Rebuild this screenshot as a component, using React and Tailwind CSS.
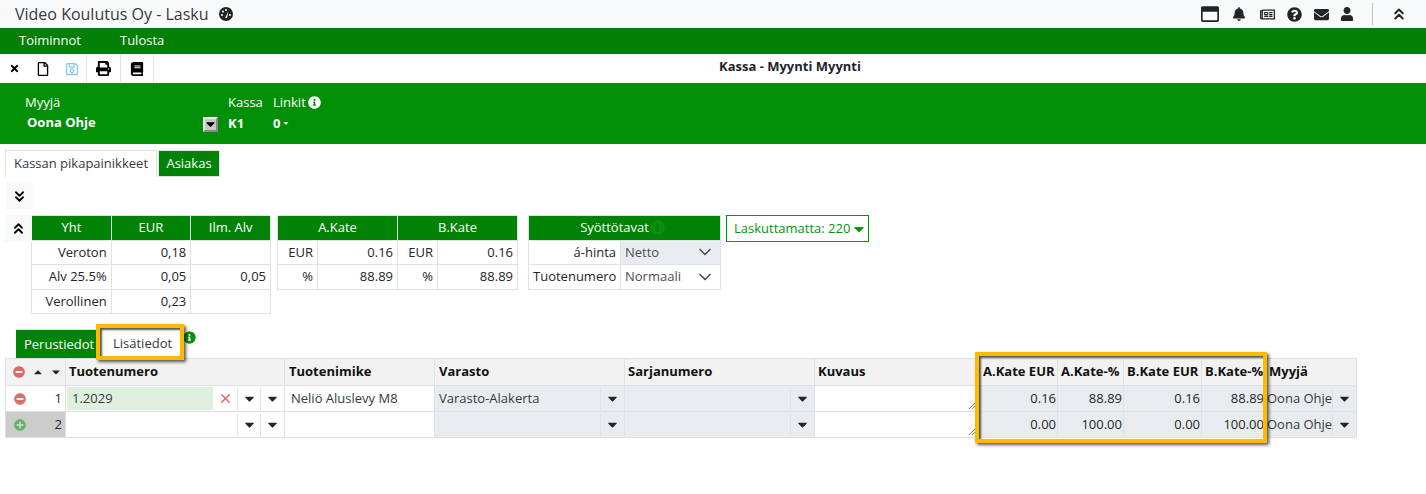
import React from "react";
import {
  FaRegWindowMaximize,
  FaBell,
  FaRegNewspaper,
  FaQuestionCircle,
  FaEnvelope,
  FaUser,
  FaTimes,
  FaRegFile,
  FaRegSave,
  FaPrint,
  FaBook,
  FaInfoCircle,
  FaMinusCircle,
  FaPlusCircle,
  FaCaretDown,
  FaCaretUp,
} from "react-icons/fa";
import { ChevronDown, ChevronsDown, ChevronsUp, X } from "lucide-react";

const cell = "border border-[#dee2e6] px-[4px] h-[24.6px] text-right text-[13px] text-[#212529] font-normal";
const head = "border border-[#dee2e6] h-[24.6px] bg-[#028207] text-white text-center text-[13px] font-normal";
const orangeBox = "border-[4px] border-[#ffb900] shadow-[2px_2px_3px_rgba(0,0,0,0.65),inset_2px_2px_2px_rgba(0,0,0,0.65)] pointer-events-none";

function GaugeIcon() {
  return (
    <svg className="ml-[10px]" width="14" height="14" viewBox="0 0 14 14">
      <circle cx="7" cy="7" r="7" fill="#212529" />
      <circle cx="3" cy="8" r="1" fill="#fff" />
      <circle cx="4" cy="4.5" r="1" fill="#fff" />
      <circle cx="7" cy="3" r="1" fill="#fff" />
      <circle cx="11" cy="8" r="1" fill="#fff" />
      <path d="M6 11 L9.5 4.5 L8 11 Z" fill="#fff" />
    </svg>
  );
}

function SummaryTables() {
  return (
    <div className="flex items-start">
      <table className="table-fixed border-collapse w-[240px] ml-[31px]">
        <thead>
          <tr>
            <th className={head}>Yht</th>
            <th className={head}>EUR</th>
            <th className={head}>Ilm. Alv</th>
          </tr>
        </thead>
        <tbody>
          <tr><td className={cell}>Veroton</td><td className={cell}>0,18</td><td className={cell}></td></tr>
          <tr><td className={cell}>Alv 25.5%</td><td className={cell}>0,05</td><td className={cell}>0,05</td></tr>
          <tr><td className={cell}>Verollinen</td><td className={cell}>0,23</td><td className={cell}></td></tr>
        </tbody>
      </table>

      <table className="table-fixed border-collapse w-[240px] ml-[6px]">
        <colgroup>
          <col className="w-[40px]" />
          <col className="w-[80px]" />
          <col className="w-[40px]" />
          <col className="w-[80px]" />
        </colgroup>
        <thead>
          <tr>
            <th colSpan={2} className={head}>A.Kate</th>
            <th colSpan={2} className={head}>B.Kate</th>
          </tr>
        </thead>
        <tbody>
          <tr><td className={cell}>EUR</td><td className={cell}>0.16</td><td className={cell}>EUR</td><td className={cell}>0.16</td></tr>
          <tr><td className={cell}>%</td><td className={cell}>88.89</td><td className={cell}>%</td><td className={cell}>88.89</td></tr>
        </tbody>
      </table>

      <table className="table-fixed border-collapse w-[192px] ml-[10px]">
        <colgroup>
          <col className="w-[92px]" />
          <col className="w-[100px]" />
        </colgroup>
        <thead>
          <tr>
            <th colSpan={2} className={head}>
              <span className="inline-flex items-center gap-[1px] -translate-x-[2px]">
                Syöttötavat <FaInfoCircle className="text-[#0b8f10] text-[15px]" />
              </span>
            </th>
          </tr>
        </thead>
        <tbody>
          <tr>
            <td className={cell}>á-hinta</td>
            <td className={`${cell} !text-left bg-[#e9ecef] !text-[#495057]`}>
              <div className="flex items-center justify-between pr-[1px] h-[20px]">Netto <ChevronDown size={20} /></div>
            </td>
          </tr>
          <tr>
            <td className={cell}>Tuotenumero</td>
            <td className={`${cell} !text-left !text-[#495057]`}>
              <div className="flex items-center justify-between pr-[1px] h-[20px]">Normaali <ChevronDown size={20} /></div>
            </td>
          </tr>
        </tbody>
      </table>

      <div className="ml-[5px] h-[27px] w-[143px] border border-[#009608] flex items-center pl-[7px] gap-[1px] text-[13px] text-[#009608]">
        Laskuttamatta: 220 <FaCaretDown className="text-[16px]" />
      </div>
    </div>
  );
}

const th = "border border-[#dee2e6] bg-[#f2f2f2] px-[4px] pb-[2px] text-left text-[13px] font-bold text-[#111] whitespace-nowrap";
const td = "border border-[#dee2e6] px-[4px] text-[13px] text-[#343a40] whitespace-nowrap";
const gray = "bg-[#e9ecef]";

function Caret() {
  return (
    <span className="flex items-center justify-center w-[23px] h-[22px] border-l border-[#dee2e6]">
      <FaCaretDown className="text-[15px] text-[#212529]" />
    </span>
  );
}

function SelectCell({ text }) {
  return (
    <td className={`${td} ${gray} !pr-[1px]`}>
      <div className="flex items-center justify-between">
        <span className="truncate">{text}</span>
        <Caret />
      </div>
    </td>
  );
}

function Row({ n, plus, code, name, store, vals }) {
  return (
    <tr className="h-[26px]">
      <td className={`border border-[#dee2e6] p-0 ${plus ? "bg-[#cccccc]" : ""}`}>
        <div className="flex items-center justify-between pl-[8px] pr-[3px] text-[13px] text-[#212529]">
          {plus ? <FaPlusCircle className="text-[12px] text-[#5cb85c]" /> : <FaMinusCircle className="text-[12px] text-[#d9534f] opacity-85" />}
          {n}
        </div>
      </td>
      <td className={`${td} !p-[1px]`}>
        <div className="flex items-center h-[23px]">
          <div className={`w-[147px] h-full flex items-center pl-[5px] ${code ? "bg-[#dff0df]" : ""}`}>{code}</div>
          <span className="w-[24px] flex justify-center">
            {code && <X size={15} strokeWidth={2.2} className="text-[#dc5f5a]" />}
          </span>
          <Caret />
          <Caret />
        </div>
      </td>
      <td className={`${td} !pl-[6px]`}>{name}</td>
      <SelectCell text={store} />
      <SelectCell text="" />
      <td className={`${td} relative`}>
        <svg className="absolute right-[1px] bottom-[1px]" width="8" height="8" viewBox="0 0 8 8">
          <path d="M1 7 L7 1 M4 7 L7 4" stroke="#777" strokeWidth="1" />
        </svg>
      </td>
      {vals.map((v, i) => (
        <td key={i} className={`${td} ${gray} text-right !px-[1px] !text-[#212529]`}>{v}</td>
      ))}
      <td className={`${td} ${gray} !px-[1px]`}>
        <div className="flex items-center justify-between">
          <span className="w-[65px] overflow-hidden">Oona Ohje</span>
          <span className="flex-1 flex justify-center border-l border-[#dee2e6] h-[22px] items-center">
            <FaCaretDown className="text-[15px] text-[#212529]" />
          </span>
        </div>
      </td>
    </tr>
  );
}

function MainTable() {
  return (
    <div className="relative ml-[5px] w-[1351px]">
      <table className="table-fixed border-collapse w-[1351px]">
        <colgroup>
          {[60, 219, 150, 190, 190, 163, 80, 66, 78, 64, 91].map((w, i) => (
            <col key={i} style={{ width: w }} />
          ))}
        </colgroup>
        <thead>
          <tr className="h-[27px]">
            <th className="border border-[#dee2e6] bg-[#f2f2f2] p-0">
              <div className="flex items-center justify-between pl-[7px] pr-[3px]">
                <FaMinusCircle className="text-[12px] text-[#d9534f] opacity-85" />
                <FaCaretUp className="text-[12px] text-[#212529]" />
                <FaCaretDown className="text-[12px] text-[#212529]" />
              </div>
            </th>
            <th className={`${th} !px-[3px]`}>Tuotenumero</th>
            <th className={th}>Tuotenimike</th>
            <th className={th}>Varasto</th>
            <th className={`${th} !px-[3px]`}>Sarjanumero</th>
            <th className={`${th} !px-[3px]`}>Kuvaus</th>
            <th className={`${th} !px-[5px]`}>A.Kate EUR</th>
            <th className={`${th} !px-[3px]`}>A.Kate-%</th>
            <th className={`${th} !px-[3px]`}>B.Kate EUR</th>
            <th className={`${th} !px-[3px]`}>B.Kate-%</th>
            <th className={`${th} !px-[3px]`}>Myyjä</th>
          </tr>
        </thead>
        <tbody>
          <Row n="1" code="1.2029" name="Neliö Aluslevy M8" store="Varasto-Alakerta" vals={["0.16", "88.89", "0.16", "88.89"]} />
          <Row n="2" plus code="" name="" store="" vals={["0.00", "100.00", "0.00", "100.00"]} />
        </tbody>
      </table>
      <div className={`absolute left-[970px] top-[-6px] w-[292px] h-[91px] ${orangeBox}`} />
    </div>
  );
}

export default function App() {
  return (
    <div className="min-h-[494px] bg-white font-['Open_Sans',sans-serif] text-[13px] text-[#212529]">
      <header className="h-[28px] bg-[#f8f9fa] flex items-center pl-[15px] pr-[18px]">
        <span className="text-[16px] text-[#343a40]">Video Koulutus Oy - Lasku</span>
        <GaugeIcon />
        <div className="ml-auto flex items-center text-[#212529]">
          <FaRegWindowMaximize className="text-[18px]" />
          <FaBell className="ml-[13px] text-[14px]" />
          <FaRegNewspaper className="ml-[14px] text-[15px]" />
          <FaQuestionCircle className="ml-[12px] text-[15px]" />
          <FaEnvelope className="ml-[12px] text-[15px]" />
          <FaUser className="ml-[11px] text-[14px]" />
          <span className="ml-[18px] w-[1px] h-[22px] bg-[#c0c4c8]" />
          <ChevronsUp size={18} strokeWidth={2.6} className="ml-[17px]" />
        </div>
      </header>

      <nav className="h-[26px] bg-[#027f07] flex items-center pl-[19px] text-white text-[13px]">
        <span>Toiminnot</span>
        <span className="ml-[39px]">Tulosta</span>
      </nav>

      <div className="h-[29px] flex items-stretch">
        <div className="w-[87px] flex items-center border-r border-[#e3e3e3] pl-[9px]">
          <FaTimes className="text-[11px] text-black" />
          <FaRegFile className="ml-[16px] text-[14px] text-black" />
          <FaRegSave className="ml-[15px] text-[14px] text-[#8ec7ea]" />
        </div>
        <div className="w-[34px] flex items-center justify-center border-r border-[#e3e3e3]">
          <FaPrint className="text-[15px] text-black" />
        </div>
        <div className="w-[33px] flex items-center justify-center border-r border-[#e3e3e3]">
          <FaBook className="text-[14px] text-black" />
        </div>
        <div className="flex-1 text-center font-bold text-[13px] text-[#212529] pt-[3px]">Kassa - Myynti Myynti</div>
      </div>

      <section className="h-[61px] bg-[#008f06] text-white flex pl-[25px] pt-[10px]">
        <div className="w-[203px]">
          <div className="leading-[18px]">Myyjä</div>
          <div className="flex items-center justify-between mt-[3px] h-[18px]">
            <span className="font-bold pl-[2px]">Oona Ohje</span>
            <span className="w-[15px] h-[15px] mt-[2px] bg-[#c8c8c8] border-[2px] border-t-[#e8e8e8] border-l-[#e8e8e8] border-r-[#8a8a8a] border-b-[#8a8a8a] flex items-center justify-center -translate-x-[10px]">
              <FaCaretDown className="text-[14px] text-black" />
            </span>
          </div>
        </div>
        <div className="w-[45px]">
          <div className="leading-[18px]">Kassa</div>
          <div className="font-bold mt-[3px] leading-[18px]">K1</div>
        </div>
        <div>
          <div className="leading-[18px] flex items-center gap-[2px]">
            Linkit <FaInfoCircle className="text-[13px] text-white" />
          </div>
          <div className="font-bold mt-[3px] leading-[18px] flex items-center gap-[2px]">
            0 <FaCaretDown className="text-[8px]" />
          </div>
        </div>
      </section>

      <div className="mt-[6px] ml-[5px] flex h-[27px] items-stretch">
        <div className="w-[152px] border-t border-x border-[#dee2e6] flex items-center justify-center text-[#343a40]">
          Kassan pikapainikkeet
        </div>
        <div className="ml-[1px] w-[62px] bg-[#028207] border border-[#dee2e6] text-white flex items-center justify-center">
          Asiakas
        </div>
      </div>

      <div className="mt-[6px] ml-[6px] w-[27px] h-[27px] bg-[#f8f9fa] flex items-center justify-center">
        <ChevronsDown size={17} strokeWidth={2.6} className="text-black" />
      </div>

      <div className="relative mt-[5px]">
        <div className="absolute left-[5px] top-0 w-[27px] h-[27px] bg-[#f8f9fa] flex items-center justify-center">
          <ChevronsUp size={17} strokeWidth={2.6} className="text-black" />
        </div>
        <SummaryTables />
      </div>

      <div className="mt-[15px] ml-[16px] flex items-end h-[29px] relative z-10">
        <div className="w-[81px] h-[29px] bg-[#028207] text-white flex items-center pl-[8px] border-t border-[#dee2e6]">Perustiedot</div>
        <div className="relative w-[85px] h-[29px] flex items-center pl-[16px] text-[#343a40]">
          Lisätiedot
          <div className={`absolute left-[-1px] top-[-5px] w-[88px] h-[36px] ${orangeBox}`} />
        </div>
        <FaInfoCircle className="ml-[1px] mb-[14px] text-[13px] text-[#0b8f10] bg-white rounded-full" />
      </div>

      <MainTable />
    </div>
  );
}
